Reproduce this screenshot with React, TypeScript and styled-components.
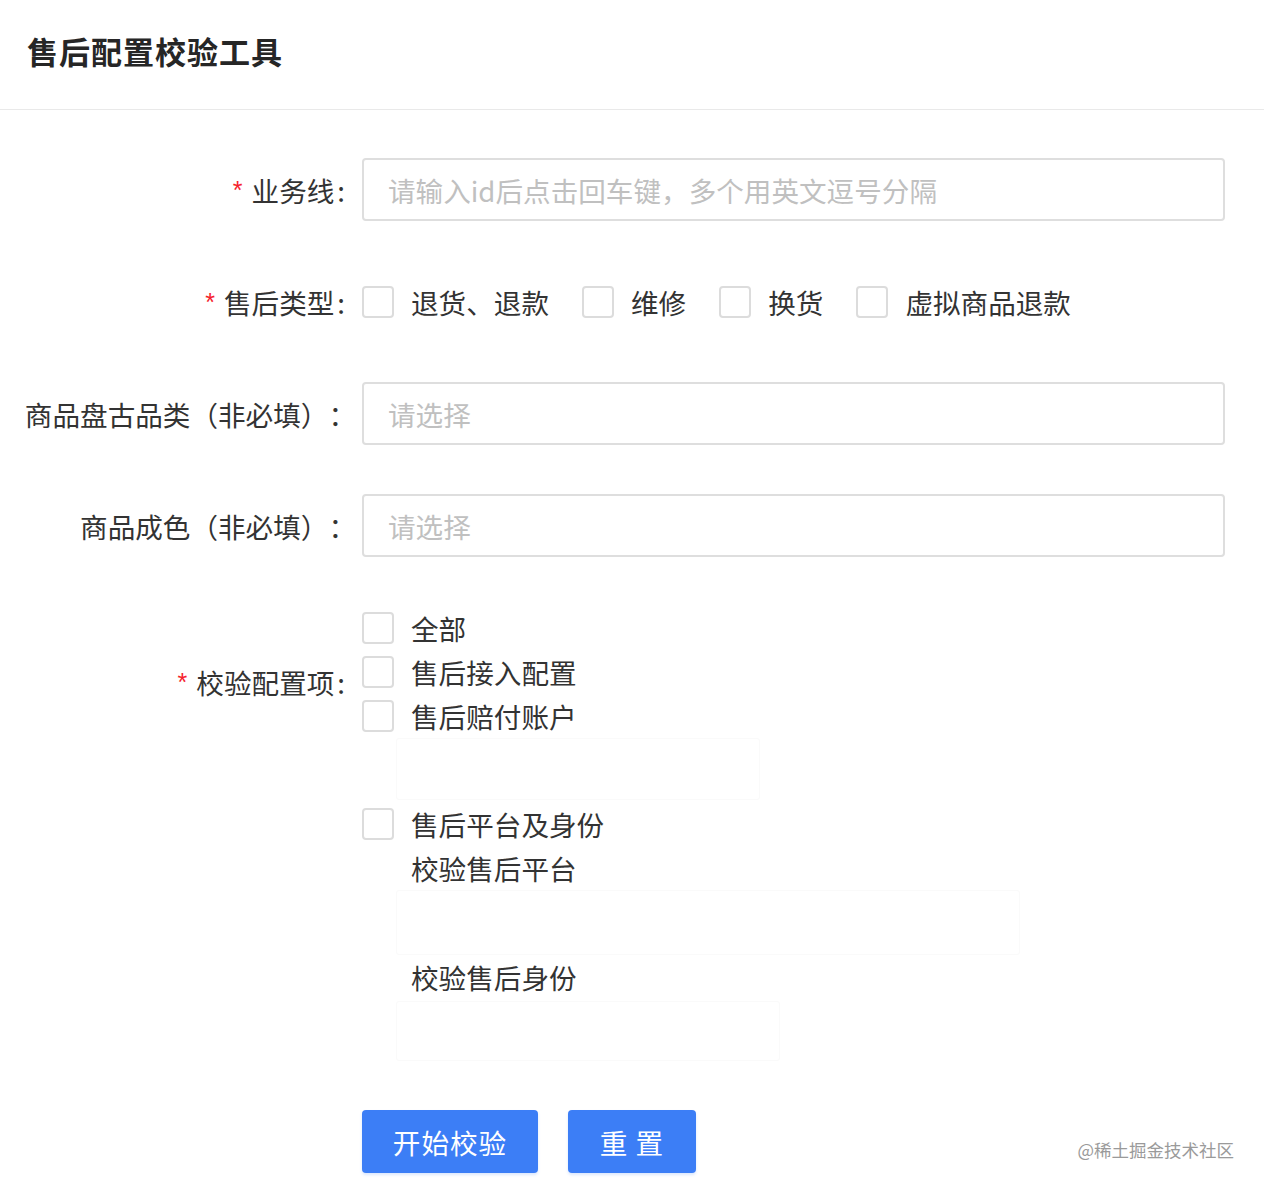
import styled, { createGlobalStyle } from "styled-components";

const GlobalStyle = createGlobalStyle`
  html, body {
    margin: 0;
    padding: 0;
    background: #ffffff;
  }
  body {
    font-family: "Noto Sans CJK SC", "Noto Sans", sans-serif;
    color: #333333;
    text-spacing-trim: space-all;
  }
`;

const Page = styled.div`
  position: relative;
  width: 1264px;
  min-height: 1192px;
  background: #fff;
`;

const Header = styled.div`
  height: 110px;
  display: flex;
  align-items: center;
  padding-left: 27px;
  border-bottom: 1px solid #e9e9e9;
  box-sizing: border-box;
`;

const Title = styled.h1`
  margin: 0 0 8px;
  font-size: 31px;
  font-weight: 700;
  color: #262626;
  letter-spacing: 1px;
`;

const Form = styled.div`
  display: flex;
  flex-direction: column;
  gap: 49px;
  padding: 48px 39px 0 0;
`;

const Row = styled.div`
  display: grid;
  grid-template-columns: 348px 1fr;
  column-gap: 14px;
  align-items: center;
`;

const Label = styled.label<{ $top?: number; $wide?: boolean }>`
  display: flex;
  justify-content: flex-end;
  align-items: center;
  align-self: ${(p) => (p.$top ? "start" : "center")};
  padding-top: ${(p) => p.$top ?? 0}px;
  padding-right: ${(p) => (p.$wide ? 0 : 3)}px;
  margin-right: ${(p) => (p.$wide ? -8 : 0)}px;
  font-size: 27.6px;
  line-height: 44px;
  color: #333;
  white-space: nowrap;
`;

const Star = styled.span`
  color: #f5222d;
  font-size: 25px;
  margin-right: 9px;
  font-family: "Liberation Sans", sans-serif;
`;

const Colon = styled.span`
  margin-left: 3px;
`;

const Input = styled.input`
  box-sizing: border-box;
  width: 100%;
  height: 63px;
  padding: 0 24px;
  border: 2px solid #dedede;
  border-radius: 4px;
  font-family: inherit;
  font-size: 27.6px;
  color: #333;
  outline: none;
  &::placeholder {
    color: #c0c0c0;
  }
`;

const InlineGroup = styled.div`
  display: flex;
  align-items: center;
  gap: 33px;
  height: 63px;
`;

const StackGroup = styled.div`
  display: flex;
  flex-direction: column;
`;

const CheckItem = styled.label<{ $mt?: number }>`
  display: flex;
  align-items: center;
  gap: 17px;
  height: 44px;
  margin-top: ${(p) => p.$mt ?? 0}px;
  font-size: 27.6px;
  color: #333;
  white-space: nowrap;
`;

const Box = styled.span`
  box-sizing: border-box;
  width: 32px;
  height: 32px;
  border: 2px solid #dcdcdc;
  border-radius: 4px;
  background: #fff;
  flex: none;
`;

const SubLabel = styled.div`
  height: 44px;
  line-height: 44px;
  padding-left: 49px;
  font-size: 27.6px;
  color: #333;
`;

const SubArea = styled.div<{ $w: number; $h: number; $mt?: number }>`
  box-sizing: border-box;
  width: ${(p) => p.$w}px;
  height: ${(p) => p.$h}px;
  margin: ${(p) => p.$mt ?? 0}px 0 0 34px;
  border: 1px solid #fafafa;
  border-radius: 3px;
`;

const Actions = styled.div`
  display: flex;
  gap: 30px;
`;

const Button = styled.button<{ $w: number }>`
  width: ${(p) => p.$w}px;
  height: 63px;
  border: none;
  border-radius: 4px;
  background: #3c7ef6;
  color: #fff;
  font-family: inherit;
  font-size: 27.6px;
  letter-spacing: 1px;
  box-shadow: 0 2px 3px rgba(60, 126, 246, 0.18);
`;

const Watermark = styled.div`
  position: absolute;
  right: 30px;
  bottom: 30px;
  font-size: 17.5px;
  color: #9a9a9a;
`;

const Check = ({ text, mt }: { text: string; mt?: number }) => (
  <CheckItem $mt={mt}>
    <Box />
    {text}
  </CheckItem>
);

export default function App() {
  return (
    <Page>
      <GlobalStyle />
      <Header>
        <Title>售后配置校验工具</Title>
      </Header>
      <Form>
        <Row>
          <Label>
            <Star>*</Star>业务线<Colon>:</Colon>
          </Label>
          <Input placeholder="请输入id后点击回车键，多个用英文逗号分隔" />
        </Row>
        <Row>
          <Label>
            <Star>*</Star>售后类型<Colon>:</Colon>
          </Label>
          <InlineGroup>
            <Check text="退货、退款" />
            <Check text="维修" />
            <Check text="换货" />
            <Check text="虚拟商品退款" />
          </InlineGroup>
        </Row>
        <Row>
          <Label $wide>商品盘古品类（非必填）：</Label>
          <Input placeholder="请选择" />
        </Row>
        <Row>
          <Label $wide>商品成色（非必填）：</Label>
          <Input placeholder="请选择" />
        </Row>
        <Row>
          <Label $top={54}>
            <Star>*</Star>校验配置项<Colon>:</Colon>
          </Label>
          <StackGroup>
            <Check text="全部" />
            <Check text="售后接入配置" />
            <Check text="售后赔付账户" />
            <SubArea $w={364} $h={62} />
            <Check text="售后平台及身份" mt={2} />
            <SubLabel>校验售后平台</SubLabel>
            <SubArea $w={624} $h={65} />
            <SubLabel>校验售后身份</SubLabel>
            <SubArea $w={384} $h={60} $mt={2} />
          </StackGroup>
        </Row>
        <Row>
          <span />
          <Actions>
            <Button $w={176}>开始校验</Button>
            <Button $w={128}>重 置</Button>
          </Actions>
        </Row>
      </Form>
      <Watermark>@稀土掘金技术社区</Watermark>
    </Page>
  );
}
